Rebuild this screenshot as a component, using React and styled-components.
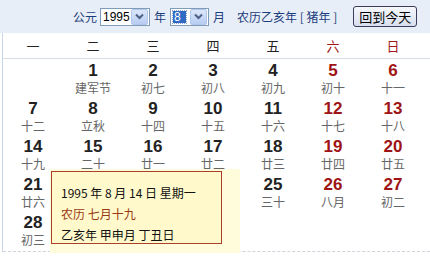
import React from 'react';
import styled, { createGlobalStyle } from 'styled-components';

const GlobalStyle = createGlobalStyle`
    body {
        margin: 0;
        background: #ffffff;
        font-family: 'Liberation Sans', 'Noto Sans CJK SC', sans-serif;
    }
`;

const Page = styled.div`
    position: relative;
    width: 430px;
    height: 257px;
    overflow: hidden;
`;

const Header = styled.div`
    display: flex;
    align-items: center;
    height: 33px;
    padding-left: 73px;
    background: #e8eef7;
    color: #1c3d7c;
    font-family: 'Noto Sans CJK SC', sans-serif;
    font-size: 12px;
`;

const Label = styled.span`
    margin-right: ${p => p.gap || 4}px;
`;

const SelectBox = styled.div`
    display: flex;
    align-items: center;
    box-sizing: border-box;
    width: ${p => p.width}px;
    height: 18px;
    margin-right: 4px;
    border: 1px solid #7f9db9;
    background: #ffffff;
`;

const SelectValue = styled.div`
    flex: 1;
    height: 100%;
    display: flex;
    align-items: center;
    padding-left: 2px;
    font-family: 'Liberation Sans', sans-serif;
    font-size: 12px;
    color: #000;
`;

const Picked = styled.span`
    display: inline-block;
    height: 12px;
    line-height: 12px;
    padding: 0 5px 0 1px;
    background: #316ac5;
    color: #ffffff;
    outline: 1px dotted #8aa4d6;
`;

const Arrow = styled.div`
    width: 15px;
    height: 14px;
    margin-right: 1px;
    display: flex;
    align-items: center;
    justify-content: center;
    background: linear-gradient(#dbe6fa, #b8cdf2);
    border: 1px solid #b2c6ec;
    border-radius: 2px;
`;

const Lunar = styled.span`
    margin-left: 8px;
`;

const TodayButton = styled.button`
    margin-left: 16px;
    height: 21px;
    padding: 0 5px;
    border: 1px solid #3b3b5c;
    border-radius: 3px;
    background: linear-gradient(#f6f8fc, #d7dfee);
    font-family: 'Noto Sans CJK SC', sans-serif;
    font-size: 13px;
    line-height: 16px;
    color: #000;
`;

const Body = styled.div`
    margin-left: 2px;
    border-left: 1px solid #c9d6e8;
`;

const WeekRow = styled.div`
    display: grid;
    grid-template-columns: repeat(7, 60px);
    height: 25px;
    align-items: center;
    border-bottom: 1px solid #d7dde6;
`;

const WeekDay = styled.div`
    text-align: center;
    font-family: 'Noto Sans CJK SC', sans-serif;
    font-size: 13px;
    color: ${p => (p.weekend ? '#a01818' : '#222')};
`;

const Grid = styled.div`
    display: grid;
    grid-template-columns: repeat(7, 60px);
    grid-auto-rows: 38px;
    padding-bottom: 2px;
    border-bottom: 1px dashed #cfd4dc;
`;

const Cell = styled.div`
    display: flex;
    flex-direction: column;
    align-items: center;
    padding-top: 3px;
`;

const DateNum = styled.div`
    font-family: 'Liberation Sans', sans-serif;
    font-weight: bold;
    font-size: 17px;
    line-height: 17px;
    color: ${p => (p.weekend ? '#9e1414' : '#222')};
`;

const LunarText = styled.div`
    margin-top: 2px;
    font-family: 'Noto Sans CJK SC', sans-serif;
    font-size: 12px;
    line-height: 14px;
    color: #666;
`;

const Popup = styled.div`
    position: absolute;
    left: 50px;
    top: 169px;
    width: 190px;
    height: 84px;
    background: #fffcdc;
`;

const PopupInner = styled.div`
    box-sizing: border-box;
    width: 171px;
    height: 73px;
    margin: 2px 0 0 1px;
    padding: 10px 0 0 9px;
    border: 1px solid #a8402c;
    background: #fff9cc;
    font-family: 'Noto Sans CJK SC', sans-serif;
    font-size: 12px;
    line-height: 21px;
    color: #111;
`;

const PopupLine = styled.div`
    color: ${p => p.color || '#111'};
    white-space: nowrap;
`;

const weekdays = ['一', '二', '三', '四', '五', '六', '日'];

const lunar = {
    1: '建军节', 2: '初七', 3: '初八', 4: '初九', 5: '初十', 6: '十一',
    7: '十二', 8: '立秋', 9: '十四', 10: '十五', 11: '十六', 12: '十七', 13: '十八',
    14: '十九', 15: '二十', 16: '廿一', 17: '廿二', 18: '廿三', 19: '廿四', 20: '廿五',
    21: '廿六', 22: '廿七', 23: '廿八', 24: '廿九', 25: '三十', 26: '八月', 27: '初二',
    28: '初三', 29: '初四', 30: '初五', 31: '初六',
};

// days that sit under the open popup and are not seen
const covered = [22, 23, 24, 29, 30, 31];

function ChevronDown() {
    return (
        <svg width="9" height="7" viewBox="0 0 9 7">
            <path d="M1 1.5 L4.5 5 L8 1.5" fill="none" stroke="#4d6185" strokeWidth="2" />
        </svg>
    );
}

export default function App() {
    const cells = [];
    for (let i = 0; i < 35; i++) {
        const day = i; // Aug 1 1995 is a Tuesday
        const col = i % 7;
        if (day >= 1 && day <= 31 && !covered.includes(day)) {
            cells.push(
                <Cell key={i}>
                    <DateNum weekend={col >= 5}>{day}</DateNum>
                    <LunarText>{lunar[day]}</LunarText>
                </Cell>
            );
        } else {
            cells.push(<Cell key={i} />);
        }
    }

    return (
        <Page>
            <GlobalStyle />
            <Header>
                <Label gap={3}>公元</Label>
                <SelectBox width={50}>
                    <SelectValue>1995</SelectValue>
                    <Arrow><ChevronDown /></Arrow>
                </SelectBox>
                <Label>年</Label>
                <SelectBox width={39}>
                    <SelectValue><Picked>8</Picked></SelectValue>
                    <Arrow><ChevronDown /></Arrow>
                </SelectBox>
                <Label>月</Label>
                <Lunar>农历乙亥年 [ 猪年 ]</Lunar>
                <TodayButton>回到今天</TodayButton>
            </Header>
            <Body>
                <WeekRow>
                    {weekdays.map((w, i) => (
                        <WeekDay key={w} weekend={i >= 5}>{w}</WeekDay>
                    ))}
                </WeekRow>
                <Grid>{cells}</Grid>
            </Body>
            <Popup>
                <PopupInner>
                    <PopupLine>1995 年 8 月 14 日 星期一</PopupLine>
                    <PopupLine color="#9a3a12">农历 七月十九</PopupLine>
                    <PopupLine>乙亥年 甲申月 丁丑日</PopupLine>
                </PopupInner>
            </Popup>
        </Page>
    );
}
